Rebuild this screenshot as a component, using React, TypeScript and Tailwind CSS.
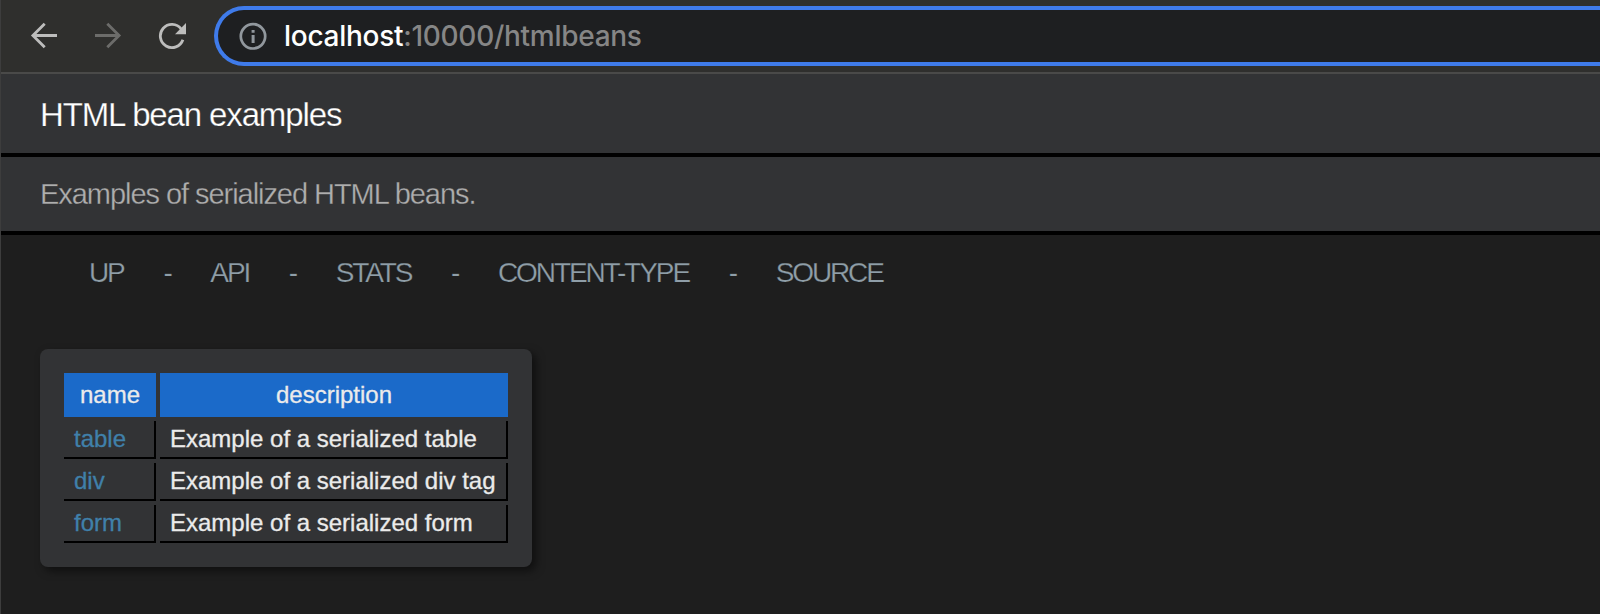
const rows = [
  { name: "table", description: "Example of a serialized table" },
  { name: "div", description: "Example of a serialized div tag" },
  { name: "form", description: "Example of a serialized form" },
];

function Toolbar() {
  return (
    <div className="flex h-[74px] items-start border-b-2 border-[#4a4a49] bg-[#2f2f2d]">
      <svg className="ml-[29px] mt-[21px] size-7 shrink-0" viewBox="0 0 28 28" fill="none" stroke="#bdbdbc" strokeWidth="2.8">
        <path d="M27 14.5H3M14.7 2.7L2.9 14.5l11.8 11.8" />
      </svg>
      <svg className="ml-[36px] mt-[21px] size-7 shrink-0" viewBox="0 0 28 28" fill="none" stroke="#6c6c6a" strokeWidth="2.8">
        <path d="M1 14.5h24M13.3 2.7l11.8 11.8-11.8 11.8" />
      </svg>
      <svg className="ml-[36px] mt-[22px] size-7 shrink-0" viewBox="0 0 28 28">
        <path d="M24.9 17.8A11.6 11.6 0 1 1 23.2 7" fill="none" stroke="#bdbdbc" strokeWidth="2.8" />
        <path d="M28 1v11.2H17z" fill="#bdbdbc" />
      </svg>
      <div className="ml-7 mt-[6px] flex h-[60px] flex-1 items-center rounded-l-full border-4 border-r-0 border-[#3f7bea] bg-[#1e1f21]">
        <svg className="ml-[21px] size-[28px] shrink-0" viewBox="0 0 28 28">
          <circle cx="14" cy="14.3" r="12.2" fill="none" stroke="#91979d" strokeWidth="2.7" />
          <path d="M12.6 7.9h3v2.9h-3zM12.6 12.9h3v8h-3z" fill="#91979d" />
        </svg>
        <p className="ml-[17px] whitespace-nowrap font-['Inter'] text-[28px] font-medium leading-9 tracking-[-0.28px] text-[#868686]">
          <span className="text-white">localhost</span>
          <span>:10000/htmlbeans</span>
        </p>
      </div>
    </div>
  );
}

function Separator() {
  return <span className="mx-[39.7px]">-</span>;
}

export default function App() {
  return (
    <div className="h-[614px] w-full overflow-hidden border-l border-[#3d3d3d] bg-[#1e1e1e] font-['Liberation_Sans',sans-serif]">
      <Toolbar />
      <header>
        <h1 className="flex h-[83px] items-center border-b-4 border-black bg-[#323335] pl-[39px] pt-[2px] text-[33px] tracking-[-1.13px] text-white [-webkit-text-stroke:0.25px_#323335]">
          HTML bean examples
        </h1>
        <p className="flex h-[78px] items-center border-b-4 border-black bg-[#323335] pl-[39px] pt-[2px] text-[29px] tracking-[-1.05px] text-[#aeaeae] [-webkit-text-stroke:0.3px_#323335]">
          Examples of serialized HTML beans.
        </p>
      </header>
      <nav className="flex h-[74px] items-center pl-[88px] pt-[2px] text-[28px] tracking-[-2.1px] text-[#8f9ea8] [-webkit-text-stroke:0.25px_#1e1e1e]">
        <a>UP</a>
        <Separator />
        <a>API</a>
        <Separator />
        <a>STATS</a>
        <Separator />
        <a>CONTENT-TYPE</a>
        <Separator />
        <a>SOURCE</a>
      </nav>
      <main className="ml-[39px] mt-10 h-[218px] w-[492px] rounded-lg bg-[#323335] p-6 shadow-[4px_4px_8px_rgba(0,0,0,0.5)]">
        <div className="grid w-[444px] grid-cols-[92px_348px] gap-1 text-2xl text-[#ebebeb] [-webkit-text-stroke:0.3px_currentColor]">
          <div className="flex h-11 items-center justify-center bg-[#1b6ac9]">name</div>
          <div className="flex h-11 items-center justify-center bg-[#1b6ac9]">description</div>
          {rows.map((row) => (
            <div key={row.name} className="contents">
              <a className="flex h-[38px] items-center border-b-2 border-r-2 border-black pl-[10px] text-[#4080aa]">{row.name}</a>
              <div className="flex h-[38px] items-center whitespace-nowrap border-b-2 border-r-2 border-black pl-[10px]">
                {row.description}
              </div>
            </div>
          ))}
        </div>
      </main>
    </div>
  );
}
